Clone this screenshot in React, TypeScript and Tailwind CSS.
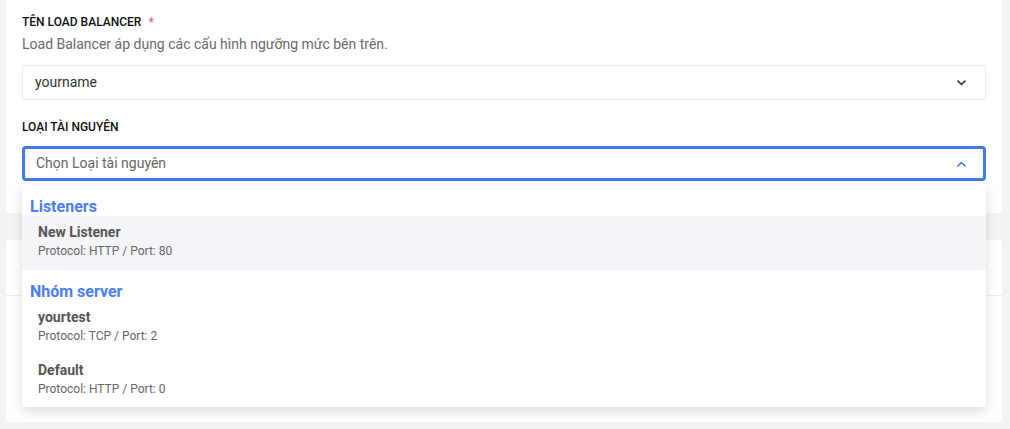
import React from "react";

function ChevronDown({ className }: { className?: string }) {
  return (
    <svg className={className} width="9" height="6" viewBox="0 0 9 6" fill="none">
      <path d="M1 1l3.5 3.5L8 1" stroke="currentColor" strokeWidth="1.6" strokeLinecap="round" strokeLinejoin="round" />
    </svg>
  );
}
function ChevronUp({ className }: { className?: string }) {
  return (
    <svg className={className} width="9" height="6" viewBox="0 0 9 6" fill="none">
      <path d="M1 5l3.5-3.5L8 5" stroke="currentColor" strokeWidth="1.6" strokeLinecap="round" strokeLinejoin="round" />
    </svg>
  );
}

export default function App() {
  return (
    <div className="w-[1010px] h-[429px] bg-[#f3f3f3] overflow-hidden relative" style={{ fontFamily: "Roboto, 'Liberation Sans', sans-serif" }}>
      <div className="ml-[6px] w-[996px] h-[213px] bg-white rounded-b-[4px] px-4 pt-[14px]">
        <div className="flex items-center text-[12px] leading-[16px] font-medium text-[#111111]">
          TÊN LOAD BALANCER <span className="ml-[7px] text-[#f05a5a]">*</span>
        </div>
        <div className="mt-[4px] text-[14px] leading-[20px] text-[#6b6b6b]">Load Balancer áp dụng các cấu hình ngưỡng mức bên trên.</div>
        <div className="mt-[11px] h-[35px] border border-[#ebebeb] rounded-[4px] flex items-center justify-between pl-[12px] pr-[19px]">
          <span className="text-[14px] text-[#333333]">yourname</span>
          <ChevronDown className="text-[#333333]" />
        </div>
        <div className="mt-[19px] text-[12px] leading-[16px] font-medium text-[#111111]">LOẠI TÀI NGUYÊN</div>
        <div className="mt-[11px] h-[35px] border-[3px] border-[#3d7af3] rounded-[4px] flex items-center justify-between pl-[11px] pr-[17px]">
          <span className="text-[14px] text-[#666666]">Chọn Loại tài nguyên</span>
          <ChevronUp className="text-[#3d7af3]" />
        </div>
      </div>
      <div className="mt-[27px] ml-[6px] w-[996px] h-[182px] bg-white rounded-[4px]">
        <div className="h-[56px] border-b border-[#ececec]"></div>
      </div>
      <div className="absolute left-[22px] top-[184px] w-[964px] bg-white rounded-[4px] shadow-[0_4px_12px_rgba(0,0,0,0.15)]">
        <div className="h-[32px] pl-2 pt-[13px] text-[16px] leading-[20px] font-bold text-[#4a7ef5]">Listeners</div>
        <div className="h-[54px] pl-4 pt-[6px] bg-[#f4f5f8]">
          <div className="text-[14px] leading-[20px] font-bold text-[#555555]">New Listener</div>
          <div className="text-[12px] leading-[18px] text-[#666666]">Protocol: HTTP / Port: 80</div>
        </div>
        <div className="h-[32px] pl-2 pt-[12px] text-[16px] leading-[20px] font-bold text-[#4a7ef5]">Nhóm server</div>
        <div className="h-[53px] pl-4 pt-[5px]">
          <div className="text-[14px] leading-[20px] font-bold text-[#555555]">yourtest</div>
          <div className="text-[12px] leading-[18px] text-[#666666]">Protocol: TCP / Port: 2</div>
        </div>
        <div className="h-[52px] pl-4 pt-[5px]">
          <div className="text-[14px] leading-[20px] font-bold text-[#555555]">Default</div>
          <div className="text-[12px] leading-[18px] text-[#666666]">Protocol: HTTP / Port: 0</div>
        </div>
      </div>
    </div>
  );
}
